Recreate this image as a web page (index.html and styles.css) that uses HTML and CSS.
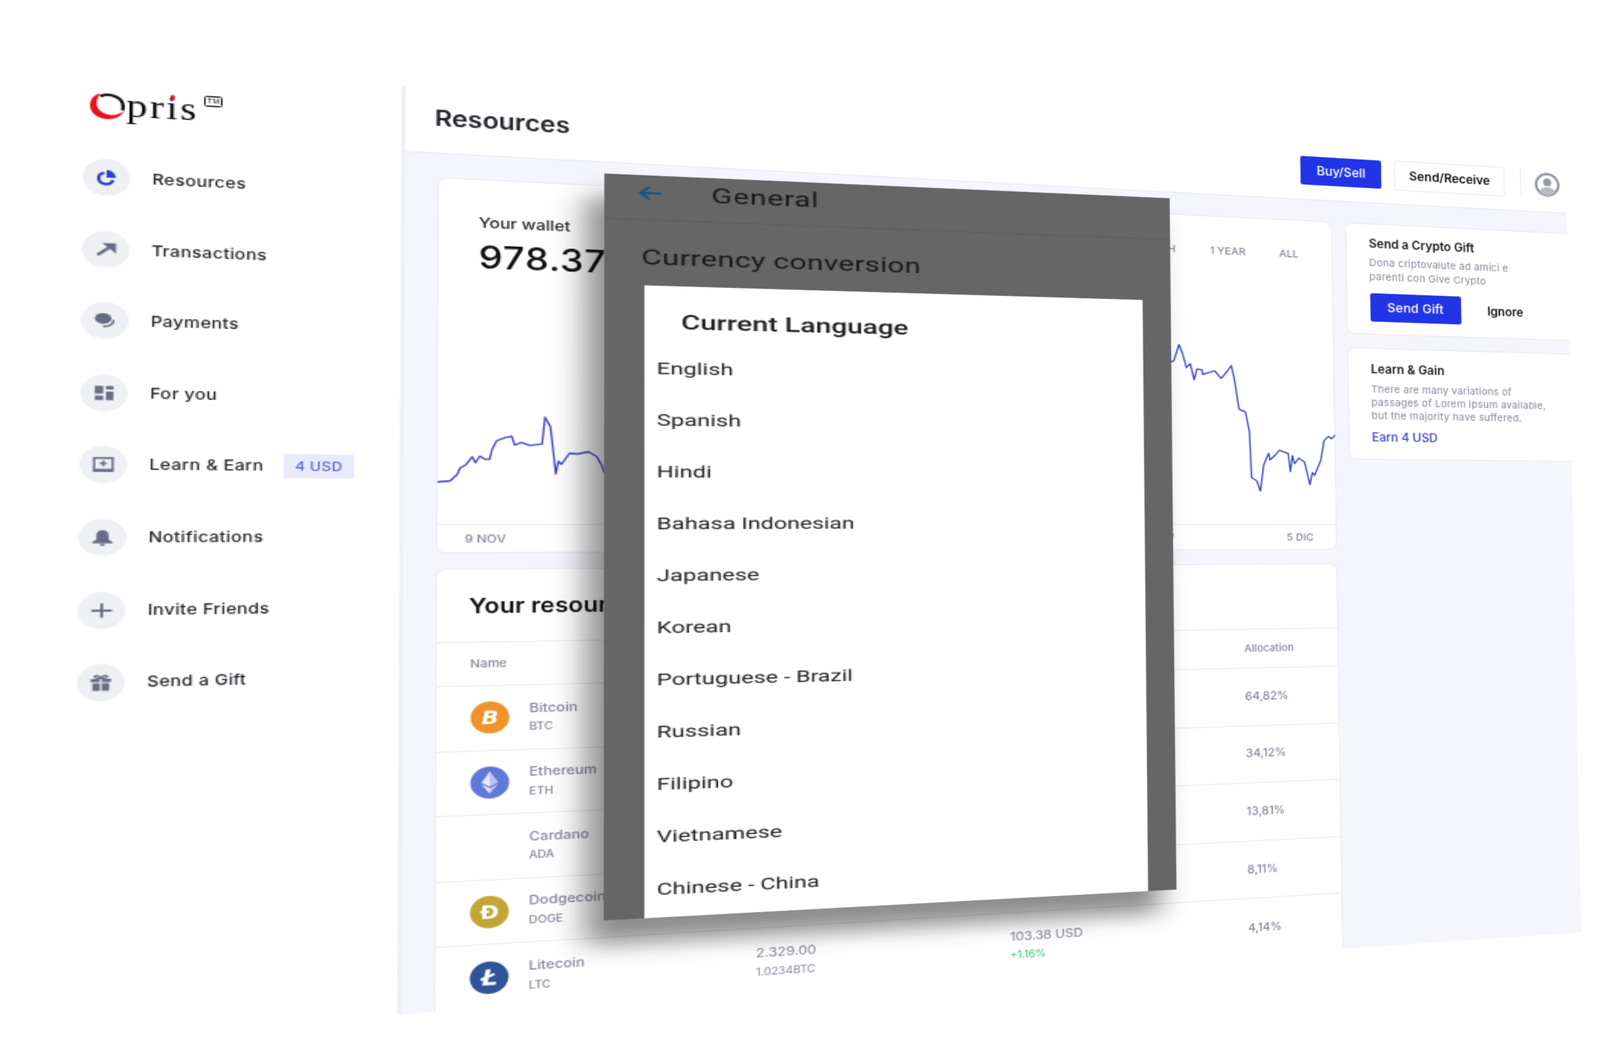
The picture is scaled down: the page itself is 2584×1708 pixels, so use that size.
FILE: index.html
```html
<!Doctype html>
<html lang="en">
<head>
    <meta charset="UTF-8">
    <meta name="viewport" content="width=device-width, initial-scale=1.0">
    <title>Opris - Resources</title>
    <link rel="stylesheet" href="styles.css">
</head>
<body>
    <div class="stage">
        <aside class="sidebar">
            <div class="logo">
                <svg class="logo-o" viewBox="0 0 22 21">
                    <path fill="none" stroke="#111" stroke-width="2.200" d="M6.500 2.600C9 .9 13 .7 16 2.100c3.800 1.800 5.600 6 4.600 11"/>
                    <path fill="#e8101a" d="M6.500 0C2.600 1.400 0 5.400 0 10.200 0 16.600 4.800 21 11 21c5 0 9-3 11-8-2.400 3-5.400 4.400-8.600 4.400C8.400 17.400 4.600 14 4.200 9.600 3.900 6 5 2.800 6.500 0z"/>
                </svg>
                <span class="logo-text">pr<span class="logo-i">i</span>s</span>
                <span class="logo-tm">TM</span>
            </div>
            <nav class="nav">
                <div class="nav-item">
                    <span class="nav-icon nav-icon-active">
                        <svg viewBox="0 0 24 24"><path fill="none" stroke="currentColor" stroke-width="3.600" d="M9.500 5.500a8 8 0 1 0 9.500 10"/><path fill="currentColor" d="M12 1.500a10 10 0 0 1 10 10.500H12z"/></svg>
                    </span>
                    Resources
                </div>
                <div class="nav-item">
                    <span class="nav-icon">
                        <svg viewBox="0 0 24 24"><path fill="none" stroke="currentColor" stroke-width="3.600" d="M3 20 18 7"/><path fill="currentColor" d="M8 3h15v14z"/></svg>
                    </span>
                    Transactions
                </div>
                <div class="nav-item">
                    <span class="nav-icon">
                        <svg viewBox="0 0 24 24"><ellipse cx="10" cy="9" rx="9" ry="7.500" fill="currentColor"/><path fill="none" stroke="currentColor" stroke-width="2.600" d="M21 11c1 5-4 9.500-11 9"/></svg>
                    </span>
                    Payments
                </div>
                <div class="nav-item">
                    <span class="nav-icon">
                        <svg viewBox="0 0 24 24"><path fill="currentColor" d="M2 2h9v11H2zM14 2h8v5h-8zM14 10h8v12h-8zM2 16h9v6H2z"/></svg>
                    </span>
                    For you
                </div>
                <div class="nav-item">
                    <span class="nav-icon">
                        <svg viewBox="0 0 24 24"><path fill="none" stroke="currentColor" stroke-width="2.400" d="M2 3h20v18H2z"/><path fill="currentColor" d="M2 18h20v4H2z"/><path fill="none" stroke="currentColor" stroke-width="2.400" d="M12 6.500v8M8 10.500h8"/></svg>
                    </span>
                    Learn &amp; Earn
                    <span class="nav-badge">4 USD</span>
                </div>
                <div class="nav-item">
                    <span class="nav-icon">
                        <svg viewBox="0 0 24 24"><path fill="currentColor" d="M12 2a6.500 6.500 0 0 0-6.500 6.500V15L1 18.500V20h22v-1.500L18.500 15V8.500A6.500 6.500 0 0 0 12 2zM9.500 21h5v2.500h-5z"/></svg>
                    </span>
                    Notifications
                </div>
                <div class="nav-item">
                    <span class="nav-icon">
                        <svg viewBox="0 0 24 24"><path fill="none" stroke="currentColor" stroke-width="3" d="M12 2v20M1 12h22"/></svg>
                    </span>
                    Invite Friends
                </div>
                <div class="nav-item">
                    <span class="nav-icon">
                        <svg viewBox="0 0 24 24"><path fill="currentColor" d="M1 7h10v4H1zM13 7h10v4H13zM3 13h8v10H3zM13 13h8v10h-8z"/><path fill="none" stroke="currentColor" stroke-width="2" d="M12 6C10 2 5 1 5 4c0 2 3 2 7 2zm0 0c2-4 7-5 7-2 0 2-3 2-7 2z"/></svg>
                    </span>
                    Send a Gift
                </div>
            </nav>
        </aside>

        <main class="main">
            <header class="topbar">
                <h1 class="page-title">Resources</h1>
                <div class="topbar-actions">
                    <button class="btn btn-primary btn-buy">Buy/Sell</button>
                    <button class="btn btn-light">Send/Receive</button>
                    <span class="topbar-sep"></span>
                    <svg class="avatar" viewBox="0 0 24 24">
                        <circle cx="12" cy="12" r="10.500" fill="none" stroke="#9598a8" stroke-width="2.400"/>
                        <circle cx="12" cy="9.500" r="3.800" fill="#9598a8"/>
                        <path fill="#b9bbc6" d="M4.500 18.500c2-3 4.500-4 7.500-4s5.500 1 7.500 4c-2 2.400-4.500 4-7.500 4s-5.500-1.600-7.500-4z"/>
                    </svg>
                </div>
            </header>

            <div class="content">
                <div class="content-left">
                    <section class="card chart-card">
                        <div class="chart-head">
                            <div class="wallet">
                                <div class="wallet-label">Your wallet</div>
                                <div class="wallet-value">978.37 USD</div>
                            </div>
                            <div class="ranges">
                                <span>1 MONTH</span>
                                <span>1 YEAR</span>
                                <span>ALL</span>
                            </div>
                        </div>
                        <svg class="chart-line" viewBox="0 100 710 195" width="710" height="195">
                            <polyline fill="none" stroke="#3a46c6" stroke-width="1.300" stroke-linejoin="round" points="0,259.500 8.700,258.500 13.600,253 15.600,247.500 19.500,244.800 24,237.900 26.300,242.800 29.300,237.300 33.200,239.900 36.100,239.900 38,230.900 41,224 46.800,221.200 51.700,219.800 53.700,227.300 58.600,225.100 64.400,227.700 73.200,226.200 75.200,203 79.100,211.100 83,251.900 84.900,240.900 86.900,243.600 92.800,234 98.600,234.500 106.400,232.500 112.300,236.500 116.200,244.500 117.800,250 300,190 450,170 565,141.300 568.800,139.900 573.400,124.300 576.500,133.200 579.600,146.100 582.900,142.100 586.200,157.500 588.800,147.200 593.100,147.800 593.700,152.100 599.500,150.200 604.200,148.500 609.800,155.600 614.900,149 618.800,143 621.300,155.300 625.200,184.900 630.800,187.300 634.100,206.600 635.400,250.500 640,253.500 643.100,263.200 646.200,238.600 650.800,226.800 652,233.300 655.900,229.300 660.500,223.900 668.200,226.800 670,244.400 672,228.800 673.800,236.600 677.700,231.300 682.800,235 687.400,256.800 689.700,245.100 691.700,247.700 697.400,233.300 700.700,213.900 704.500,209.900 707.600,211.900 711,208.400"/>
                        </svg>
                        <div class="chart-foot">
                            <span>9 NOV</span>
                            <span class="foot-mid">28 NOV</span>
                            <span>5 DIC</span>
                        </div>
                    </section>

                    <section class="card table-card">
                        <h2 class="table-title">Your resources</h2>
                        <div class="row row-head">
                            <div>Name</div>
                            <div></div>
                            <div></div>
                            <div>Allocation</div>
                        </div>
                        <div class="row">
                            <div class="coin">
                                <svg class="coin-icon" viewBox="0 0 24 24"><circle cx="12" cy="12" r="12" fill="#f0932b"/><text x="12" y="17" class="coin-glyph">B</text></svg>
                                <div><div class="coin-name">Bitcoin</div><div class="coin-code">BTC</div></div>
                            </div>
                            <div></div>
                            <div></div>
                            <div class="alloc">64,82%</div>
                        </div>
                        <div class="row">
                            <div class="coin">
                                <svg class="coin-icon" viewBox="0 0 24 24"><circle cx="12" cy="12" r="12" fill="#5f78dc"/><path fill="#e6e9fb" d="M12 3.500 6.800 12 12 15z"/><path fill="#b8c2f3" d="M12 3.500 17.200 12 12 15z"/><path fill="#e6e9fb" d="M6.800 13.200 12 16.200v4.300z"/><path fill="#b8c2f3" d="M17.200 13.200 12 16.200v4.300z"/></svg>
                                <div><div class="coin-name">Ethereum</div><div class="coin-code">ETH</div></div>
                            </div>
                            <div></div>
                            <div></div>
                            <div class="alloc">34,12%</div>
                        </div>
                        <div class="row">
                            <div class="coin">
                                <span class="coin-icon"></span>
                                <div><div class="coin-name">Cardano</div><div class="coin-code">ADA</div></div>
                            </div>
                            <div></div>
                            <div></div>
                            <div class="alloc">13,81%</div>
                        </div>
                        <div class="row">
                            <div class="coin">
                                <svg class="coin-icon" viewBox="0 0 24 24"><circle cx="12" cy="12" r="12" fill="#c2a633"/><text x="12" y="17" class="coin-glyph coin-glyph-plain">Ð</text></svg>
                                <div><div class="coin-name">Dodgecoin</div><div class="coin-code">DOGE</div></div>
                            </div>
                            <div></div>
                            <div></div>
                            <div class="alloc">8,11%</div>
                        </div>
                        <div class="row">
                            <div class="coin">
                                <svg class="coin-icon" viewBox="0 0 24 24"><circle cx="12" cy="12" r="12" fill="#2f5497"/><text x="12" y="17.500" class="coin-glyph coin-glyph-big">Ł</text></svg>
                                <div><div class="coin-name">Litecoin</div><div class="coin-code">LTC</div></div>
                            </div>
                            <div class="cell">
                                <div class="cell-main">2.329.00</div>
                                <div class="cell-sub">1.0234BTC</div>
                            </div>
                            <div class="cell">
                                <div class="cell-main">103.38 USD</div>
                                <div class="cell-up">+1.16%</div>
                            </div>
                            <div class="alloc">4,14%</div>
                        </div>
                    </section>
                </div>

                <div class="rail">
                    <section class="card rail-card">
                        <h3 class="rail-title">Send a Crypto Gift</h3>
                        <p class="rail-text">Dona criptovalute ad amici e<br>parenti con Give Crypto</p>
                        <div class="rail-actions">
                            <button class="btn btn-primary btn-gift">Send Gift</button>
                            <span class="rail-ignore">Ignore</span>
                        </div>
                    </section>
                    <section class="card rail-card rail-card-learn">
                        <h3 class="rail-title">Learn &amp; Gain</h3>
                        <p class="rail-text">There are many variations of<br>passages of Lorem Ipsum available,<br>but the majority have suffered.</p>
                        <div class="rail-link">Earn 4 USD</div>
                    </section>
                </div>
            </div>
        </main>
    </div>

    <div class="phone">
        <div class="phone-bar">
            <svg class="phone-back" viewBox="0 0 16 16"><path fill="none" stroke="#17507f" stroke-width="1.900" d="M16 8H1.500M8 1.500 1.500 8 8 14.500"/></svg>
            <span class="phone-title">General</span>
        </div>
        <div class="phone-sub">Currency conversion</div>
        <div class="dialog">
            <div class="dialog-title">Current Language</div>
            <div class="lang">English</div>
            <div class="lang">Spanish</div>
            <div class="lang">Hindi</div>
            <div class="lang">Bahasa Indonesian</div>
            <div class="lang">Japanese</div>
            <div class="lang">Korean</div>
            <div class="lang">Portuguese - Brazil</div>
            <div class="lang">Russian</div>
            <div class="lang">Filipino</div>
            <div class="lang">Vietnamese</div>
            <div class="lang">Chinese - China</div>
        </div>
    </div>
</body>
</html>
```

FILE: styles.css
```css
:root {
    --blue: #2135e6;
    --ink: #26262e;
    --muted: #85889a;
    --line: #ecedf2;
    --panel: #f5f6fb;
    --icon: #686c84;
}

* {
    margin: 0;
    padding: 0;
    box-sizing: border-box;
}

body {
    position: relative;
    width: 2584px;
    height: 1708px;
    overflow: hidden;
    background-color: white;
    color: var(--ink);
    font-family: Inter, 'Open Sans', sans-serif;
}

/* the whole dashboard is a flat page tilted onto the picture */
.stage {
    position: absolute;
    top: 0;
    left: 0;
    display: flex;
    width: 1190px;
    height: 782px;
    transform-origin: 0 0;
    transform: matrix3d(2.60429, 0.184076, 0, 0.00021701, -0.027453, 1.970025, 0, -0.00002704, 0, 0, 1, 0, 81.924, 102.224, 0, 1);
    filter: blur(0.35px);
}

.sidebar {
    width: 230px;
    flex-shrink: 0;
    background-color: white;
}

.logo {
    display: flex;
    height: 76px;
    padding: 22px 0 0 25px;
    color: #0b0b0b;
}

.logo-o {
    width: 22px;
    height: 21px;
    flex-shrink: 0;
}

.logo-text {
    margin: -3px 0 0 1px;
    font-family: 'Liberation Serif', serif;
    font-size: 27px;
    line-height: 24px;
    letter-spacing: 1.500px;
}

.logo-i {
    position: relative;
}

.logo-i::after {
    content: "";
    position: absolute;
    top: 4px;
    left: 2px;
    width: 3.500px;
    height: 3.500px;
    border-radius: 50%;
    background-color: #e8101a;
}

.logo-tm {
    height: 9px;
    margin: -3px 0 0 3px;
    padding: 0 1.500px;
    border: 1px solid #111;
    border-radius: 1.500px;
    font-family: 'Liberation Sans', sans-serif;
    font-size: 5.500px;
    line-height: 7px;
}

.nav {
    display: flex;
    flex-direction: column;
    gap: 28.600px;
    padding-left: 20.500px;
}

.nav-item {
    display: flex;
    align-items: center;
    gap: 14.400px;
    height: 30px;
    font-size: 11.700px;
    font-weight: 500;
    letter-spacing: 0.250px;
}

.nav-icon {
    display: flex;
    align-items: center;
    justify-content: center;
    width: 30px;
    height: 30px;
    flex-shrink: 0;
    border-radius: 50%;
    background-color: #eff0f4;
    color: var(--icon);
}

.nav-icon svg {
    width: 14px;
    height: 14px;
}

.nav-icon-active {
    color: #2f3fca;
}

.nav-badge {
    display: flex;
    align-items: center;
    justify-content: center;
    width: 47px;
    height: 20px;
    margin-left: -1.400px;
    background-color: #e9ebfc;
    color: #5960d2;
    font-size: 10px;
}

.main {
    display: flex;
    flex-direction: column;
    width: 960px;
    height: 782px;
    overflow: hidden;
    background-color: var(--panel);
    border-left: 3px solid #eff0f4;
}

.topbar {
    display: flex;
    align-items: center;
    justify-content: space-between;
    height: 57px;
    flex-shrink: 0;
    padding: 0 6px 0 20px;
    background-color: white;
    border-bottom: 1px solid var(--line);
}

.page-title {
    margin-top: -3px;
    font-size: 18.800px;
    font-weight: 600;
}

.topbar-actions {
    display: flex;
    align-items: center;
}

.btn {
    height: 28px;
    border: none;
    border-radius: 2px;
    font-family: inherit;
    font-size: 11.500px;
    font-weight: 500;
}

.btn-primary {
    background-color: var(--blue);
    color: white;
}

.btn-buy {
    width: 74px;
    margin-right: 13px;
}

.btn-light {
    width: 103px;
    background-color: white;
    box-shadow: 0 0 0 1px var(--line);
    color: #111;
    font-weight: 600;
}

.topbar-sep {
    width: 1px;
    height: 30px;
    margin: 0 13px 0 16px;
    background-color: var(--line);
}

.avatar {
    width: 25px;
    height: 25px;
}

.content {
    display: grid;
    grid-template-columns: 710px 1fr;
    gap: 14px;
    padding: 21px 0 0 23px;
    flex: 1;
}

.content-left {
    display: flex;
    flex-direction: column;
    gap: 15px;
}

.card {
    background-color: white;
    border-radius: 6px;
    box-shadow: 0 0 0 1px var(--line);
}

.chart-card {
    display: flex;
    flex-direction: column;
    height: 319px;
    flex-shrink: 0;
}

.chart-head {
    display: flex;
    justify-content: space-between;
    height: 100px;
    flex-shrink: 0;
}

.wallet {
    padding: 30px 0 0 28px;
}

.wallet-label {
    font-size: 12.300px;
    font-weight: 500;
    line-height: 14px;
}

.wallet-value {
    margin-top: 8px;
    color: #111;
    font-size: 27px;
    font-weight: 500;
    line-height: 30px;
    letter-spacing: 0.600px;
}

.ranges {
    display: flex;
    gap: 30px;
    padding: 28px 30px 0 0;
    color: var(--muted);
    font-size: 9.400px;
    font-weight: 500;
    line-height: 10px;
}

.chart-line {
    display: block;
    flex-shrink: 0;
    overflow: visible;
}

.chart-foot {
    display: flex;
    align-items: center;
    height: 24px;
    padding: 0 20px 0 19px;
    border-top: 1px solid var(--line);
    color: var(--muted);
    font-size: 9.300px;
    font-weight: 500;
}

.foot-mid {
    margin-left: auto;
    margin-right: 98px;
}

.table-card {
    flex: 1;
    border-radius: 6px 6px 0 0;
}

.table-title {
    display: flex;
    align-items: center;
    height: 61.500px;
    padding-left: 22px;
    border-bottom: 1px solid var(--line);
    color: #111;
    font-size: 17.500px;
    font-weight: 600;
}

.row {
    display: grid;
    grid-template-columns: 206px 198px 200px 1fr;
    align-items: center;
    height: 54.600px;
    padding-left: 23px;
    border-bottom: 1px solid var(--line);
    color: var(--muted);
    font-size: 10.200px;
}

.row-head {
    height: 37.500px;
    font-size: 9.200px;
    font-weight: 500;
}

.row:last-child {
    border-bottom: none;
}

.coin {
    display: flex;
    align-items: center;
    gap: 13.500px;
}

.coin-icon {
    display: block;
    width: 28px;
    height: 27px;
    flex-shrink: 0;
}

.coin-glyph {
    fill: white;
    font-family: 'DejaVu Sans', sans-serif;
    font-size: 14px;
    font-style: italic;
    font-weight: 700;
    text-anchor: middle;
}

.coin-glyph-plain {
    font-style: normal;
}

.coin-glyph-big {
    font-size: 16px;
}

.coin-name {
    font-size: 10.500px;
    font-weight: 500;
    line-height: 14px;
}

.coin-code {
    margin-top: 3.500px;
    font-size: 8.500px;
    font-weight: 500;
    line-height: 11px;
}

.cell {
    padding-top: 3px;
}

.cell-main {
    font-size: 10.800px;
    line-height: 13px;
}

.cell-sub,
.cell-up {
    margin-top: 3.500px;
    font-size: 8.800px;
    line-height: 11px;
}

.cell-up {
    color: #35c46a;
}

.alloc {
    padding-bottom: 2px;
    font-weight: 500;
}

.rail {
    display: flex;
    flex-direction: column;
    gap: 14.500px;
}

.rail-card {
    height: 108px;
    padding: 13px 0 0 20.500px;
    border-radius: 6px 0 0 6px;
}

.rail-title {
    color: #16161c;
    font-size: 11.200px;
    font-weight: 600;
    line-height: 12px;
}

.rail-text {
    margin-top: 6px;
    color: var(--muted);
    font-size: 9.400px;
    line-height: 14px;
    letter-spacing: 0.200px;
}

.rail-actions {
    display: flex;
    align-items: center;
    gap: 25.500px;
    margin-top: 8.500px;
}

.btn-gift {
    width: 85px;
    height: 28px;
    font-size: 12px;
}

.rail-ignore {
    color: #111;
    font-size: 11.200px;
    font-weight: 600;
}

.rail-card-learn {
    padding-top: 14.500px;
}

.rail-card-learn .rail-text {
    margin-top: 6.500px;
    line-height: 13.400px;
}

.rail-link {
    margin-top: 7.500px;
    color: #3d43c4;
    font-size: 11.200px;
    font-weight: 500;
}

/* phone screen pasted on top, with its own tilt */
.phone {
    position: absolute;
    top: 0;
    left: 0;
    display: flex;
    flex-direction: column;
    width: 394px;
    height: 700px;
    background-color: #666;
    box-shadow: -12px 22px 20px rgba(0,0,0,0.45);
    color: #1a1a1a;
    font-family: Roboto, sans-serif;
    transform-origin: 0 0;
    transform: matrix3d(2.700914, 0.166523, 0, 0.0002031, -0.020829, 1.6933, 0, -0.000019893, 0, 0, 1, 0, 976, 280, 0, 1);
    filter: blur(0.25px);
}

.phone-bar {
    display: flex;
    align-items: center;
    height: 43px;
    flex-shrink: 0;
    padding: 0 0 9px 22px;
    border-bottom: 1px solid #5f5f5f;
}

.phone-back {
    width: 15px;
    height: 16px;
}

.phone-title {
    margin-left: 33px;
    font-size: 20.500px;
    letter-spacing: 0.400px;
}

.phone-sub {
    margin-top: 23px;
    padding-left: 24px;
    font-size: 20.500px;
    line-height: 24px;
    letter-spacing: 0.150px;
}

.dialog {
    flex: 1;
    margin: 15px 21px 0 26px;
    overflow: hidden;
    background-color: white;
}

.dialog-title {
    height: 54px;
    padding: 23px 0 0 24px;
    color: #222;
    font-size: 19.300px;
    font-weight: 500;
    line-height: 24px;
}

.lang {
    display: flex;
    align-items: center;
    height: 49px;
    padding-left: 8px;
    color: #222;
    font-size: 15.600px;
}
```
